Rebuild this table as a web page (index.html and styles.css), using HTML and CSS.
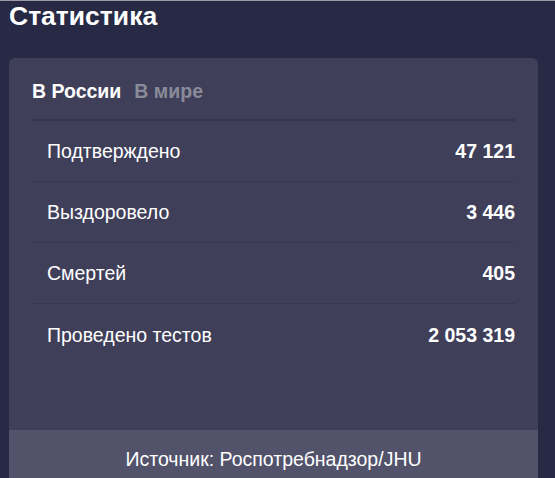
FILE: index.html
```html
<!DOCTYPE html>
<html lang="ru">
<head>
<meta charset="utf-8">
<link rel="stylesheet" href="styles.css">
</head>
<body>
<div class="page">
  <h1 class="title">Статистика</h1>
  <section class="card">
    <div class="card-body">
      <div class="tabs">
        <span class="tab tab-active">В России</span>
        <span class="tab">В мире</span>
      </div>
      <ul class="stats">
        <li class="row"><span class="label">Подтверждено</span><span class="value">47 121</span></li>
        <li class="row"><span class="label">Выздоровело</span><span class="value">3 446</span></li>
        <li class="row"><span class="label">Смертей</span><span class="value">405</span></li>
        <li class="row"><span class="label">Проведено тестов</span><span class="value">2 053 319</span></li>
      </ul>
    </div>
    <div class="card-footer">Источник: Роспотребнадзор/JHU</div>
  </section>
</div>
</body>
</html>
```
FILE: styles.css
```css
html, body {
  margin: 0;
  padding: 0;
  background: #282a45;
  height: 100%;
  overflow: hidden;
}
.page {
  border-top: 1px solid #9a9ba6;
  font-family: "Liberation Sans", Arial, sans-serif;
  color: #ffffff;
  padding: 0 17px 0 9px;
}
.title {
  margin: 0;
  padding-top: 1px;
  font-size: 26.5px;
  line-height: 28px;
  font-weight: bold;
  height: 56px;
}
.card {
  background: #3f3f5a;
  border-radius: 6px 6px 0 0;
  overflow: hidden;
}
.card-body {
  padding: 23px 23px 65px 22px;
}
.tabs {
  display: flex;
  gap: 13px;
  font-size: 19.5px;
  line-height: 21px;
  font-weight: bold;
  padding: 0 0 17px 1px;
  border-bottom: 2px solid #34354d;
}
.tab {
  color: #8a8b98;
}
.tab-active {
  color: #ffffff;
}
.stats {
  list-style: none;
  margin: 0;
  padding: 0;
}
.row {
  display: flex;
  justify-content: space-between;
  align-items: center;
  box-sizing: border-box;
  height: 61px;
  line-height: 21px;
  padding: 1px 0 0 16px;
  font-size: 19.5px;
  border-bottom: 1px solid #36374f;
}
.row:last-child {
  border-bottom: none;
}
.value {
  font-weight: bold;
}
.card-footer {
  background: #52526b;
  text-align: center;
  font-size: 19.5px;
  line-height: 21px;
  padding: 19px 0 18px;
}
```
